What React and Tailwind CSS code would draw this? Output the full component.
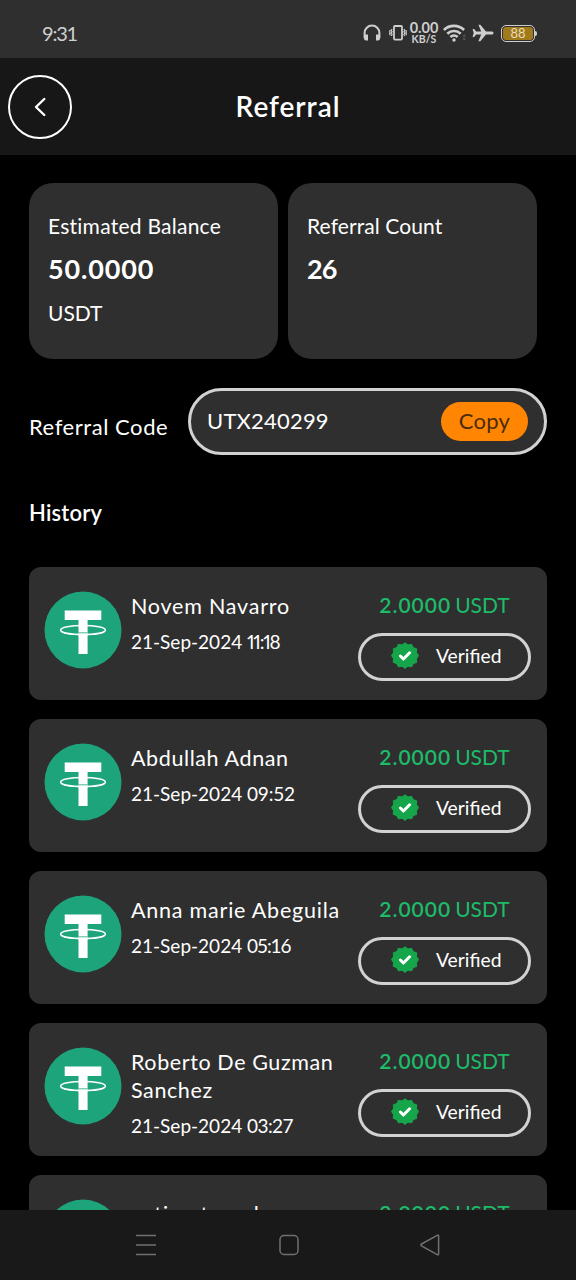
import clsx from 'clsx'

const history = [
  { name: 'Novem Navarro',             nameCls: 'tracking-[0.78px]', day: '21-Sep-2024', time: '11:18', timeCls: 'proportional-nums tracking-[-1.2px]' },
  { name: 'Abdullah Adnan',            nameCls: 'tracking-[0.6px]',  day: '21-Sep-2024', time: '09:52', timeCls: 'tracking-[-0.2px]' },
  { name: 'Anna marie Abeguila',       nameCls: 'tracking-[0.78px]', day: '21-Sep-2024', time: '05:16', timeCls: 'tracking-[-1.1px]' },
  { name: 'Roberto De Guzman Sanchez', nameCls: 'tracking-[0.6px]',  day: '21-Sep-2024', time: '03:27', timeCls: 'tracking-[-0.6px]' },
  { name: 'actimetravel',              nameCls: 'tracking-[1.1px]',  day: '21-Sep-2024', time: '02:45', timeCls: 'tracking-normal' },
]

function StatusBar() {
  return (
    <div className="h-[58px] shrink-0 bg-[#2f2f2f] pt-2 pl-[42px] pr-[39px] flex items-center justify-between text-[#cfcfcf]">
      <span className="text-[20px] leading-6 tracking-[-1.2px]">9:31</span>
      <div className="flex items-center">
        {/* Headphones */}
        <svg width="18" height="18" viewBox="0 0 18 18" fill="none" stroke="currentColor" strokeWidth="2">
          <path d="M1.6 14V9a7.4 7.4 0 0 1 14.8 0v5" />
          <path d="M1 10.5h4v6H3a2 2 0 0 1-2-2zM17 10.5h-4v6h2a2 2 0 0 0 2-2z" fill="currentColor" stroke="none" />
        </svg>
        {/* Vibrate */}
        <svg className="ml-2" width="18" height="18" viewBox="0 0 18 18" fill="none" stroke="currentColor">
          <rect x="5" y="2" width="8" height="13.6" rx="1" strokeWidth="1.8" />
          <path d="M3.1 5l-1 1.4 1 1.4-1 1.4 1 1.4-1 1.4M.8 6.2v5M14.9 5l1 1.4-1 1.4 1 1.4-1 1.4 1 1.4M17.2 6.2v5" strokeWidth="1.2" />
        </svg>
        <div className="ml-[3px] w-7 flex flex-col items-center font-bold">
          <span className="text-[14.5px] leading-[12px] whitespace-nowrap">0.00</span>
          <span className="text-[10.5px] leading-[10px] whitespace-nowrap">KB/S</span>
        </div>
        {/* Wifi */}
        <svg className="ml-[5px]" width="24" height="18" viewBox="0 0 24 18" fill="none" stroke="currentColor" strokeWidth="2.6">
          <path d="M.9 6a14.4 14.4 0 0 1 20.2 0M4.3 9.7a9.6 9.6 0 0 1 13.4 0M7.4 13a5.2 5.2 0 0 1 7.2 0" />
          <circle cx="11" cy="16" r="1.7" fill="currentColor" stroke="none" />
          <path d="M19.5 12.5l1.7-2 1.7 2zM19.5 14.5l1.7 2 1.7-2z" fill="#626262" stroke="none" />
        </svg>
        {/* Airplane */}
        <svg className="ml-[5px]" width="22" height="18" viewBox="0 0 22 18" fill="currentColor">
          <path d="M20 7.5h-6L8.3.7H6.4l2.8 6.8H4.1L2.2 5H.6l1.1 4-1.1 4h1.6l1.9-2.5h5.1l-2.8 6.8h1.9l5.7-6.8h6a1.5 1.5 0 0 0 0-3z" />
        </svg>
        {/* Battery */}
        <div className="ml-[7px] flex items-center">
          <div className="w-[34px] h-[17px] rounded-[5px] border-[1.5px] border-[#cfcfcf] p-px">
            <div className="h-full rounded-[3px] bg-[#a17a1c] flex items-center justify-center text-[13px] leading-none text-[#e9dcb8]">88</div>
          </div>
          <div className="w-0.5 h-[5px] rounded-r bg-[#cfcfcf]" />
        </div>
      </div>
    </div>
  )
}

function Header() {
  return (
    <header className="h-[97px] shrink-0 bg-[#171717] flex items-center px-2">
      <button className="size-16 rounded-full border-2 border-white flex items-center justify-center" aria-label="Back">
        <svg width="12" height="20" viewBox="0 0 12 20" fill="none" stroke="white" strokeWidth="2.4" strokeLinecap="round" strokeLinejoin="round">
          <path d="M10.3 2L2 10l8.3 8" />
        </svg>
      </button>
      <h1 className="flex-1 pr-16 pb-0.5 text-center text-[28px] leading-8 font-semibold tracking-[0.95px]">Referral</h1>
    </header>
  )
}

function StatCard({ label, labelCls, value, valueCls, unit }) {
  return (
    <div className="w-[249px] h-[176px] rounded-[24px] bg-[#2f2f2f] pl-5 pt-[29px]">
      <div className={clsx('-ml-px text-[21px] leading-7', labelCls)}>{label}</div>
      <div className={clsx('-ml-px mt-[13px] text-[27px] leading-8 font-bold', valueCls)}>{value}</div>
      {unit && <div className="-ml-px mt-[14px] text-[21px] leading-7">{unit}</div>}
    </div>
  )
}

function TetherLogo() {
  return (
    <svg className="shrink-0" width="78" height="78" viewBox="0 0 78 78">
      <circle cx="39" cy="39" r="38.5" fill="#1ea47a" />
      <path d="M20.7 19.5h36.6V29H43.6v34h-9.1V29H20.7z" fill="white" />
      <ellipse cx="39" cy="39" rx="22.4" ry="4.6" fill="none" stroke="white" strokeWidth="1.5" />
      <path d="M17 40c2.5 5 41.5 5 44 0" fill="none" stroke="white" strokeWidth="1.2" />
      <path d="M34.5 41.8h9.1" stroke="#1ea47a" strokeWidth="0.8" />
    </svg>
  )
}

function VerifiedBadge() {
  return (
    <div className="w-[173px] h-12 rounded-full border-[3px] border-[#d2d2d2] flex items-center pl-[30px]">
      <svg className="-mt-0.5" width="28" height="28" viewBox="0 0 28 28">
        <path
          d="M14 .8l3 2.2 3.6-.7 1.6 3.3 3.5 1.2-.2 3.7 2 3.1-2 3.1.2 3.7-3.5 1.2-1.6 3.3-3.6-.7-3 2.2-3-2.2-3.6.7-1.6-3.3-3.5-1.2.2-3.7-2-3.1 2-3.1-.2-3.7 3.5-1.2 1.6-3.3 3.6.7z"
          fill="#17a54b" stroke="#17a54b" strokeLinejoin="round"
        />
        <path d="M9.4 14l3 3 6.2-6.2" fill="none" stroke="white" strokeWidth="3" strokeLinecap="round" strokeLinejoin="round" />
      </svg>
      <span className="ml-[17px] -mt-0.5 text-[19.3px] leading-6">Verified</span>
    </div>
  )
}

function HistoryRow({ name, nameCls, day, time, timeCls }) {
  return (
    <div className="h-[133px] shrink-0 rounded-[12px] bg-[#2f2f2f] pl-[15px] pr-4 flex">
      <div className="pt-6">
        <TetherLogo />
      </div>
      <div className="ml-[9px] pt-[25px] w-[228px]">
        <div className={clsx('text-[21.5px] leading-7', nameCls)}>{name}</div>
        <div className="mt-[10px] text-[19px] leading-6 whitespace-nowrap">
          {day} <span className={timeCls}>{time}</span>
        </div>
      </div>
      <div className="pt-[26px] flex flex-col items-center">
        <div className="text-[21px] leading-6 text-[#1cbc69] whitespace-nowrap">
          <span className="font-semibold tracking-[1px]">2.0000</span>
          <span className="ml-1">USDT</span>
        </div>
        <div className="mt-4">
          <VerifiedBadge />
        </div>
      </div>
    </div>
  )
}

function NavBar() {
  return (
    <nav className="h-[70px] shrink-0 bg-[#191919] flex items-center justify-between pl-[135px] pr-[136px]">
      <svg width="22" height="22" viewBox="0 0 22 22" stroke="#707070" strokeWidth="1.5">
        <path d="M1 1.5h20M1 11h20M1 20.5h20" />
      </svg>
      <svg width="20" height="22" viewBox="0 0 20 22" fill="none" stroke="#707070" strokeWidth="1.5">
        <rect x="1" y="1.5" width="18" height="19" rx="4" />
      </svg>
      <svg width="20" height="22" viewBox="0 0 20 22" fill="none" stroke="#707070" strokeWidth="1.5" strokeLinejoin="round">
        <path d="M17.2 1.3L1.5 10c-.8.5-.8 1.4 0 1.9l15.7 8.8c.8.4 1.4 0 1.4-.7V2c0-.7-.6-1.1-1.4-.7z" />
      </svg>
    </nav>
  )
}

export default function App() {
  return (
    <div className="w-[576px] h-[1280px] overflow-hidden bg-black text-white font-['Lato','Liberation_Sans',sans-serif] flex flex-col">
      <StatusBar />
      <Header />

      <main className="flex-1 min-h-0 overflow-hidden px-[29px]">
        <div className="mt-7 flex gap-2.5">
          <StatCard label="Estimated Balance" labelCls="tracking-[0.25px]" value="50.0000" valueCls="tracking-[0.85px]" unit="USDT" />
          <StatCard label="Referral Count" labelCls="tracking-[0.1px]" value="26" valueCls="tracking-[-1px]" />
        </div>

        {/* Referral code */}
        <div className="mt-[29px] flex items-center justify-between">
          <span className="pt-2.5 text-[22px] leading-7 tracking-[0.55px]">Referral Code</span>
          <div className="w-[359px] h-[67px] rounded-full border-[3px] border-[#d2d2d2] bg-[#2f2f2f] pl-4 pr-4 flex items-center justify-between">
            <span className="-mt-0.5 text-[22px] tracking-[0.2px]">UTX240299</span>
            <button className="w-[87px] h-[39px] rounded-full bg-[#ff8503] pb-0.5 text-[22px] tracking-[0.3px] text-[#4b2c0b]">Copy</button>
          </div>
        </div>

        <h2 className="mt-[42px] text-[22px] leading-8 font-semibold tracking-[0.2px]">History</h2>

        <div className="mt-[38px] flex flex-col gap-[19px]">
          {history.map((item) => (
            <HistoryRow key={item.name} {...item} />
          ))}
        </div>
      </main>

      <NavBar />
    </div>
  )
}
